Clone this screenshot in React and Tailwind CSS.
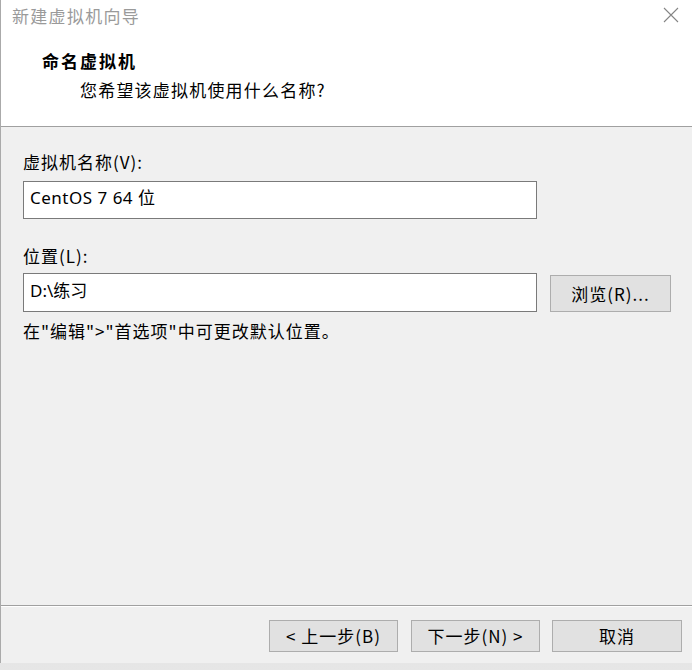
import React from "react";

const font = { fontFamily: '"Noto Sans", "Noto Sans CJK SC", sans-serif' };

function Btn({ children, className = "" }) {
  return (
    <div
      className={
        "flex items-center justify-center bg-[#e1e1e1] border border-[#adadad] text-[17px] leading-[24px] text-black tracking-[1px] " +
        className
      }
    >
      {children}
    </div>
  );
}

export default function App() {
  return (
    <div
      className="w-[692px] h-[670px] flex flex-col bg-gradient-to-b from-[#cfcfcf] to-[#e6e6e6] overflow-hidden"
      style={{ fontFamily: '"Noto Sans CJK SC", "Noto Sans", sans-serif' }}
    >
      <div className="h-[663px] w-full flex flex-col border-l border-[#aaaaaa] shrink-0">
        {/* Header */}
        <div className="h-[127px] shrink-0 bg-white border-b border-[#a0a0a0] relative">
          <div className="pt-[4px] pl-[11px] text-[17px] leading-[24px] tracking-[1.3px] text-[#9a9a9a]">
            新建虚拟机向导
          </div>
          <svg
            className="absolute left-[662px] top-[7px]"
            width="16"
            height="16"
            viewBox="0 0 16 16"
          >
            <path d="M1 1 L15 15 M15 1 L1 15" stroke="#858585" strokeWidth="1.1" fill="none" />
          </svg>
          <div className="mt-[21px] pl-[41px] text-[17px] leading-[24px] font-bold tracking-[2px] text-black">
            命名虚拟机
          </div>
          <div className="mt-[5px] pl-[79px] text-[17px] leading-[24px] tracking-[1.2px] text-black">
            您希望该虚拟机使用什么名称?
          </div>
        </div>

        {/* Body */}
        <div className="flex-1 bg-[#f0f0f0] flex flex-col pl-[22px] pt-[23px] text-[17px] leading-[24px] text-black">
          <div className="tracking-[1px]">虚拟机名称(V):</div>
          <div className="mt-[7px] w-[514px] h-[38px] bg-white border border-[#7a7a7a] px-[6px] pt-[3px]">
            <span style={font} className="tracking-[0.5px]">CentOS 7 64 </span>
            <span>位</span>
          </div>
          <div className="mt-[25px] tracking-[1px]">位置(L):</div>
          <div className="mt-[5px] flex items-start gap-[13px]">
            <div className="w-[514px] h-[39px] bg-white border border-[#7a7a7a] px-[6px] pt-[4px]">
              <span style={font}>D:\</span>
              <span>练习</span>
            </div>
            <Btn className="mt-[2px] w-[121px] h-[37px]">浏览(R)...</Btn>
          </div>
          <div className="mt-[7px] tracking-[1px]">在"编辑"&gt;"首选项"中可更改默认位置。</div>
        </div>

        {/* Footer */}
        <div className="h-[58px] shrink-0 bg-[#f0f0f0] border-t border-[#a0a0a0] flex flex-col">
          <div className="h-[1px] bg-white" />
          <div className="flex justify-end pr-[10px] pt-[13px]">
            <Btn className="w-[129px] h-[32px]">&lt; 上一步(B)</Btn>
            <Btn className="ml-[13px] w-[129px] h-[32px]">下一步(N) &gt;</Btn>
            <Btn className="ml-[12px] w-[130px] h-[32px]">取消</Btn>
          </div>
        </div>
      </div>
    </div>
  );
}
